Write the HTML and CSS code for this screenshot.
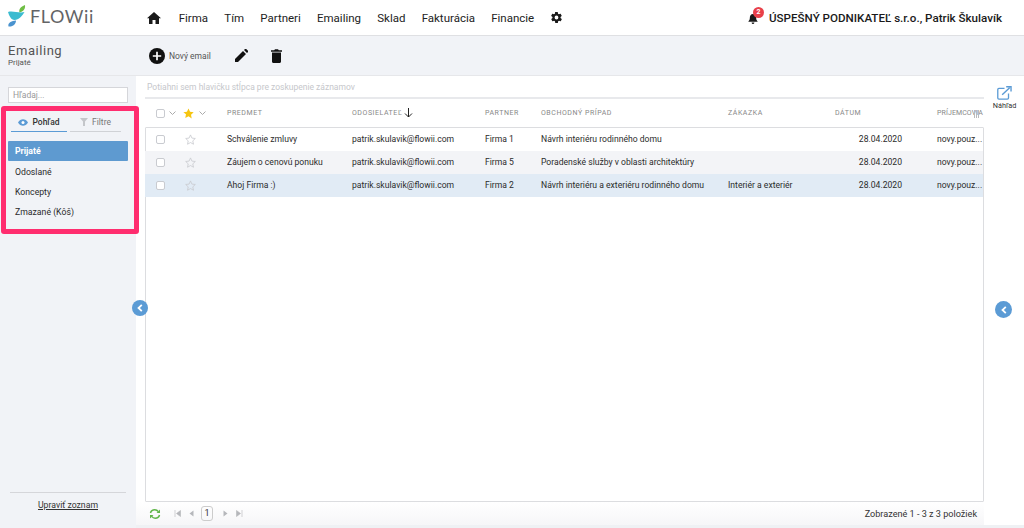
FILE: index.html
```html
<!DOCTYPE html>
<html lang="sk">
<head>
<meta charset="utf-8">
<title>Flowii Emailing</title>
<link rel="stylesheet" href="styles.css">
</head>
<body>
<header class="topbar">
  <div class="logo">
    <svg class="logo-mark" width="18" height="22" viewBox="0 0 18 22"><path d="M17 0C17.500 3 16 6.500 11.500 7.500C10.500 4.500 12.500 1.500 17 0Z" fill="#6fbe44"/><path d="M0 7C5 5.500 11 8.500 16.500 7C14 11 11 15 6.500 15C3 15 1 10.500 0 7Z" fill="#3bbcd0"/><path d="M.5 21.500C-.5 18 3 15.800 8 15.500C8 19 5 22 .5 21.500Z" fill="#4a93cf"/></svg>
    <span class="logo-text">FLOWii</span>
  </div>
  <nav class="nav">
    <svg class="nav-home" width="14" height="12" viewBox="0 0 14 12"><path d="M7 0 L14 6.300 H12 V12 H8.500 V8 H5.500 V12 H2 V6.300 H0 Z" fill="#1a1a1a"/></svg>
    <span>Firma</span><span>Tím</span><span>Partneri</span><span>Emailing</span><span>Sklad</span><span>Fakturácia</span><span>Financie</span>
    <svg class="nav-gear" width="13" height="13" viewBox="0 0 24 24"><path fill="#1a1a1a" d="M19.400 13c.1-.3.100-.7.100-1s0-.7-.1-1l2.100-1.600c.2-.2.300-.4.100-.6l-2-3.500c-.1-.2-.4-.3-.6-.2l-2.500 1c-.5-.4-1.100-.7-1.700-1l-.4-2.600c0-.3-.2-.5-.5-.5h-4c-.3 0-.5.200-.5.400l-.4 2.700c-.6.200-1.100.6-1.700 1l-2.500-1c-.2-.1-.5 0-.6.200l-2 3.500c-.1.200-.1.500.1.600L4.600 11c-.1.300-.1.700-.1 1s0 .7.100 1l-2.100 1.600c-.2.200-.3.400-.1.600l2 3.500c.1.200.4.300.6.200l2.500-1c.5.400 1.100.7 1.700 1l.4 2.600c0 .3.200.5.500.5h4c.3 0 .5-.2.500-.4l.4-2.700c.6-.2 1.100-.6 1.700-1l2.500 1c.2.100.5 0 .6-.2l2-3.500c.1-.2.100-.5-.1-.6zM12 15.500a3.500 3.500 0 1 1 0-7 3.500 3.500 0 0 1 0 7z"/></svg>
  </nav>
  <div class="user">
    <div class="bell">
      <svg width="10" height="11" viewBox="0 0 11 12"><path d="M5.500 1C3 1 2 3 2 5.500C2 7.500 1.300 8.300 .3 9.500H10.700C9.700 8.300 9 7.500 9 5.500C9 3 8 1 5.500 1Z M4 10.300H7C7 11.300 6.300 12 5.500 12C4.700 12 4 11.300 4 10.300Z" fill="#1a1a1a"/></svg>
      <span class="badge">2</span>
    </div>
    <span>ÚSPEŠNÝ PODNIKATEĽ s.r.o., Patrik Škulavík</span>
  </div>
</header>

<section class="toolbar">
  <div class="crumb">
    <div class="crumb-title">Emailing</div>
    <div class="crumb-sub">Prijaté</div>
  </div>
  <div class="actions">
    <div class="new-mail">
      <svg width="16" height="16" viewBox="0 0 16 16"><circle cx="8" cy="8" r="8" fill="#111"/><path d="M8 3.800V12.200M3.800 8H12.200" stroke="#fff" stroke-width="1.700"/></svg>
      <span>Nový email</span>
    </div>
    <svg width="13" height="13" viewBox="0 0 13 13"><path d="M0 13V10L8 2L11 5L3 13Z M9 1L10 0C10.400-.2 10.800-.2 11.200 0L13 1.800C13.200 2.200 13.200 2.600 13 3L12 4Z" fill="#111"/></svg>
    <svg width="11" height="14" viewBox="0 0 11 14"><path d="M1 3.500H10V12.500C10 13.400 9.400 14 8.500 14H2.500C1.600 14 1 13.400 1 12.500Z M0 1.200H3.200L4 .3H7L7.800 1.200H11V2.700H0Z" fill="#111"/></svg>
  </div>
</section>

<div class="body">
  <aside class="sidebar">
    <div class="search"><span>Hľadaj...</span></div>
    <div class="panel">
      <div class="tabs">
        <div class="tab tab-active">
          <svg width="10" height="7" viewBox="0 0 10 7"><path d="M0 3.500C2.500-.8 7.500-.8 10 3.500C7.500 7.800 2.500 7.800 0 3.500Z" fill="#5b9bd5"/><circle cx="5" cy="3.500" r="1.500" fill="#fff"/></svg>
          <span>Pohľad</span>
        </div>
        <div class="tab tab-idle">
          <svg width="8" height="8" viewBox="0 0 8 8"><path d="M0 0H8L5 3.600V8H3V3.600Z" fill="#c4c6ca"/></svg>
          <span>Filtre</span>
        </div>
      </div>
      <ul class="folders">
        <li class="folder folder-active">Prijaté</li>
        <li class="folder">Odoslané</li>
        <li class="folder">Koncepty</li>
        <li class="folder">Zmazané (Kôš)</li>
      </ul>
    </div>
    <div class="side-foot"><a class="edit-link">Upraviť zoznam</a></div>
    <button class="collapse collapse-left" aria-label="Zbaliť"><svg width="6" height="8" viewBox="0 0 6 8"><path d="M4.800 .8L1.500 4L4.800 7.200" fill="none" stroke="#fff" stroke-width="1.800"/></svg></button>
  </aside>

  <main class="main">
    <div class="group-hint">Potiahni sem hlavičku stĺpca pre zoskupenie záznamov</div>
    <div class="grid-head cols">
      <div class="cell cell-check"><i class="check"></i><svg class="chev" width="7" height="4" viewBox="0 0 7 4"><path d="M.5 .5L3.500 3.500L6.500 .5" fill="none" stroke="#aaa"/></svg></div>
      <div class="cell cell-star"><svg width="11" height="11" viewBox="0 0 24 24"><path d="M12 1l3.400 7.300 7.900 1-5.800 5.500 1.500 7.900L12 18l-7 3.700 1.500-7.900L.7 9.300l7.900-1z" fill="#f6c510"/></svg><svg class="chev" width="7" height="4" viewBox="0 0 7 4"><path d="M.5 .5L3.500 3.500L6.500 .5" fill="none" stroke="#aaa"/></svg></div>
      <div class="cell">PREDMET</div>
      <div class="cell">ODOSIELATEĽ<svg class="sort" width="9" height="10" viewBox="0 0 9 10"><path d="M4.500 0V9M1 5.500L4.500 9L8 5.500" fill="none" stroke="#222"/></svg></div>
      <div class="cell">PARTNER</div>
      <div class="cell">OBCHODNÝ PRÍPAD</div>
      <div class="cell">ZÁKAZKA</div>
      <div class="cell">DÁTUM</div>
      <div class="cell cell-last">PRÍJEMCOVIA<span class="grip"></span></div>
    </div>
    <div class="grid-box">
      <div class="row cols">
        <div class="cell cell-check"><i class="check"></i></div>
        <div class="cell cell-star"><svg class="star-off" width="11" height="11" viewBox="0 0 24 24"><path d="M12 2l3.100 6.900 7.400.9-5.500 5.100 1.500 7.400L12 18.600l-6.500 3.700L7 14.900 1.500 9.800l7.400-.9z" fill="none" stroke="#c9cbd0" stroke-width="1.800"/></svg></div>
        <div class="cell">Schválenie zmluvy</div>
        <div class="cell">patrik.skulavik@flowii.com</div>
        <div class="cell">Firma 1</div>
        <div class="cell">Návrh interiéru rodinného domu</div>
        <div class="cell"></div>
        <div class="cell cell-date">28.04.2020</div>
        <div class="cell">novy.pouz...</div>
      </div>
      <div class="row row-alt cols">
        <div class="cell cell-check"><i class="check"></i></div>
        <div class="cell cell-star"><svg class="star-off" width="11" height="11" viewBox="0 0 24 24"><path d="M12 2l3.100 6.900 7.400.9-5.500 5.100 1.500 7.400L12 18.600l-6.500 3.700L7 14.900 1.500 9.800l7.400-.9z" fill="none" stroke="#c9cbd0" stroke-width="1.800"/></svg></div>
        <div class="cell">Záujem o cenovú ponuku</div>
        <div class="cell">patrik.skulavik@flowii.com</div>
        <div class="cell">Firma 5</div>
        <div class="cell">Poradenské služby v oblasti architektúry</div>
        <div class="cell"></div>
        <div class="cell cell-date">28.04.2020</div>
        <div class="cell">novy.pouz...</div>
      </div>
      <div class="row row-sel cols">
        <div class="cell cell-check"><i class="check"></i></div>
        <div class="cell cell-star"><svg class="star-off" width="11" height="11" viewBox="0 0 24 24"><path d="M12 2l3.100 6.900 7.400.9-5.500 5.100 1.500 7.400L12 18.600l-6.500 3.700L7 14.900 1.500 9.800l7.400-.9z" fill="none" stroke="#c9cbd0" stroke-width="1.800"/></svg></div>
        <div class="cell">Ahoj Firma :)</div>
        <div class="cell">patrik.skulavik@flowii.com</div>
        <div class="cell">Firma 2</div>
        <div class="cell">Návrh interiéru a exteriéru rodinného domu</div>
        <div class="cell">Interiér a exteriér</div>
        <div class="cell cell-date">28.04.2020</div>
        <div class="cell">novy.pouz...</div>
      </div>
    </div>
    <footer class="pager">
      <div class="pager-left">
        <svg class="refresh" width="12" height="12" viewBox="0 0 12 12"><path d="M1.500 5C2 3 3.700 1.800 5.800 1.800C7.300 1.800 8.500 2.500 9.400 3.600M10.500 7C10 9 8.300 10.200 6.200 10.200C4.700 10.200 3.500 9.500 2.600 8.400" fill="none" stroke="#5fb548" stroke-width="1.500"/><path d="M11 1.500V5H7.500Z M1 10.500V7H4.500Z" fill="#5fb548"/></svg>
        <svg class="pg-ico" width="7" height="7" viewBox="0 0 7 7"><path d="M1 0V7M6.500 .5L2.500 3.500L6.500 6.500Z" fill="#b5b7bb" stroke="#b5b7bb" stroke-width=".6"/></svg>
        <svg class="pg-ico" width="5" height="7" viewBox="0 0 5 7"><path d="M4.500 .5L.5 3.500L4.500 6.500Z" fill="#b5b7bb"/></svg>
        <span class="page-num">1</span>
        <svg class="pg-ico" width="5" height="7" viewBox="0 0 5 7"><path d="M.5 .5L4.500 3.500L.5 6.500Z" fill="#b5b7bb"/></svg>
        <svg class="pg-ico" width="7" height="7" viewBox="0 0 7 7"><path d="M6 0V7M.5 .5L4.500 3.500L.5 6.500Z" fill="#b5b7bb" stroke="#b5b7bb" stroke-width=".6"/></svg>
      </div>
      <div class="pager-info">Zobrazené 1 - 3 z 3 položiek</div>
    </footer>
  </main>

  <aside class="preview">
    <div class="preview-btn">
      <svg width="15" height="14" viewBox="0 0 16 15"><path d="M8 2.500H2C1.200 2.500 .8 3 .8 3.700V12.800C.8 13.500 1.200 14 2 14H11C11.800 14 12.300 13.500 12.300 12.800V8" fill="none" stroke="#5b9bd5" stroke-width="1.400"/><path d="M5.500 9.500L13.500 1.800M9.800 .8H15V6" fill="none" stroke="#5b9bd5" stroke-width="1.500"/></svg>
      <span>Náhľad</span>
    </div>
    <button class="collapse collapse-right" aria-label="Zbaliť"><svg width="6" height="8" viewBox="0 0 6 8"><path d="M4.800 .8L1.500 4L4.800 7.200" fill="none" stroke="#fff" stroke-width="1.800"/></svg></button>
  </aside>
</div>
</body>
</html>
```

FILE: styles.css
```css
* { box-sizing: border-box; }
html, body { margin: 0; height: 528px; overflow: hidden; }
body { font-family: Roboto, "Liberation Sans", sans-serif; color: #2b2b2b; background: #fff; display: flex; flex-direction: column; }

.topbar { height: 36px; flex: none; display: flex; align-items: center; background: #fff; border-bottom: 1px solid #dfe0e3; }
.logo { width: 148px; display: flex; align-items: center; padding-left: 8px; }
.logo-mark { flex: none; margin-right: 4px; margin-bottom: 4px; }
.logo-text { font-family: Lato, sans-serif; font-size: 18px; letter-spacing: .6px; color: #636466; line-height: 1; margin-bottom: 3px; }
.nav { display: flex; align-items: center; font-size: 11.500px; color: #222; gap: 16.200px; }
.nav-home { margin-right: 1.500px; margin-left: -1px; }
.nav-gear { margin-left: 0; }
.user { margin-left: auto; padding-right: 22px; display: flex; align-items: center; gap: 11px; font-size: 11.600px; font-weight: 500; color: #1a1a1a; }
.bell { position: relative; display: flex; margin-top: 2px; }
.badge { position: absolute; left: 5px; top: -6px; width: 11px; height: 11px; border-radius: 50%; background: #e8404a; color: #fff; font-size: 7px; font-weight: 700; line-height: 11px; text-align: center; }

.toolbar { height: 40px; flex: none; display: flex; align-items: center; background: #f1f3f7; border-bottom: 1px solid #e6e7ea; }
.crumb { width: 149px; padding-left: 8px; margin-top: -2px; }
.crumb-title { font-size: 13px; letter-spacing: .55px; color: #555; line-height: 15px; }
.crumb-sub { font-size: 8px; color: #555; line-height: 9px; }
.actions { display: flex; align-items: center; }
.new-mail { display: flex; align-items: center; gap: 4px; font-size: 8.500px; color: #555; margin-right: 24px; }
.actions > svg:last-child { margin-left: 23px; }

.body { flex: 1; display: flex; min-height: 0; }
.sidebar { width: 136px; flex: none; background: #f1f3f7; position: relative; display: flex; flex-direction: column; }
.search { margin: 11px 8px 3px; height: 16px; background: #fff; border: 1px solid #d5d6da; font-size: 8.500px; color: #999; padding-left: 4px; line-height: 14px; }
.panel { width: 138px; height: 128px; margin-left: 1px; border: 5px solid #ff2d6f; border-radius: 3px; padding: 2px 2px 0 2px; position: relative; z-index: 1; flex: none; }
.tabs { display: flex; gap: 3px; padding-left: 3px; }
.tab { height: 19px; display: flex; align-items: center; justify-content: center; gap: 4px; font-size: 8.500px; }
.tab-active { width: 56px; border-bottom: 1.500px solid #5b9bd5; font-weight: 500; color: #333; }
.tab-idle { width: 51px; border-bottom: 1.500px solid #d0d2d6; color: #777; }
.folders { list-style: none; margin: 9px 0 0; padding: 0; }
.folder { height: 20px; line-height: 20px; padding-left: 7px; font-size: 8.700px; color: #2b2b2b; }
.folder-active { width: 120px; height: 20px; margin-bottom: 1px; background: #5e9ad0; color: #fff; font-weight: 700; border-radius: 1px; }
.side-foot { margin: auto 10px 0; height: 36px; border-top: 1px solid #d5d6da; text-align: center; padding-top: 7px; font-size: 8.700px; }
.edit-link { text-decoration: underline; color: #333; }
.collapse { position: absolute; padding: 0; border: 0; border-radius: 50%; background: #5b9bd5; display: flex; align-items: center; justify-content: center; }
.collapse-left { width: 16px; height: 16px; left: 132px; top: 224px; z-index: 2; }
.collapse-right { width: 17px; height: 17px; left: 11px; top: 225px; }

.main { width: 848px; flex: none; padding-left: 9px; display: flex; flex-direction: column; border-bottom: 3px solid #eff1f4; }
.group-hint { height: 23px; border-bottom: 2px solid #e8e9ec; padding: 6px 0 0 2px; font-size: 8.500px; color: #c6c7cb; }
.cols { display: grid; grid-template-columns: 35px 47px 125px 133px 56px 187px 107px 102px 47px; }
.grid-head { height: 28px; align-items: center; font-size: 7px; letter-spacing: .55px; color: #888; }
.cell { white-space: nowrap; display: flex; align-items: center; min-width: 0; }
.cell-check { padding-left: 11px; gap: 4px; }
.cell-star { padding-left: 3px; gap: 5px; }
.cell-last { position: relative; letter-spacing: .1px; }
.grip { position: absolute; right: 5px; top: 1px; width: 5px; height: 8px; background: repeating-linear-gradient(90deg, #b9babd 0 1px, transparent 1px 2px); }
.check { display: block; width: 9px; height: 9px; border: 1px solid #c9cbd0; border-radius: 2px; background: #fff; }
.sort { margin-left: 2px; }
.grid-box { flex: 1; border: 1px solid #dcdde0; border-radius: 1px; min-height: 0; }
.row { height: 23px; align-items: center; font-size: 8.600px; color: #2b2b2b; margin-left: -1px; padding-bottom: 1px; }
.row .check, .row .star-off { margin-top: 1px; }
.row-alt { background: #f3f4f7; }
.row-sel { background: #e1ebf5; }
.cell-date { justify-content: flex-end; padding-right: 35px; }
.star-off { margin-left: 2px; }
.pager { height: 23px; flex: none; display: flex; justify-content: space-between; align-items: center; padding: 0 7px 0 13px; background: linear-gradient(#fff, #f6f6f8); font-size: 9.100px; color: #333; margin-left: -9px; }
.pager-left { display: flex; align-items: center; }
.refresh { margin-right: 13px; }
.pg-ico { margin-right: 8px; }
.page-num { width: 12px; height: 15px; margin: 0 10px 0 -1px; border: 1px solid #ccc; border-radius: 3px; text-align: center; line-height: 13px; font-size: 9px; }

.preview { flex: 1; position: relative; border-bottom: 3px solid #eff1f4; }
.preview-btn { display: flex; flex-direction: column; align-items: center; padding-top: 10px; font-size: 7.300px; color: #333; gap: 1px; padding-left: 1px; }
```
